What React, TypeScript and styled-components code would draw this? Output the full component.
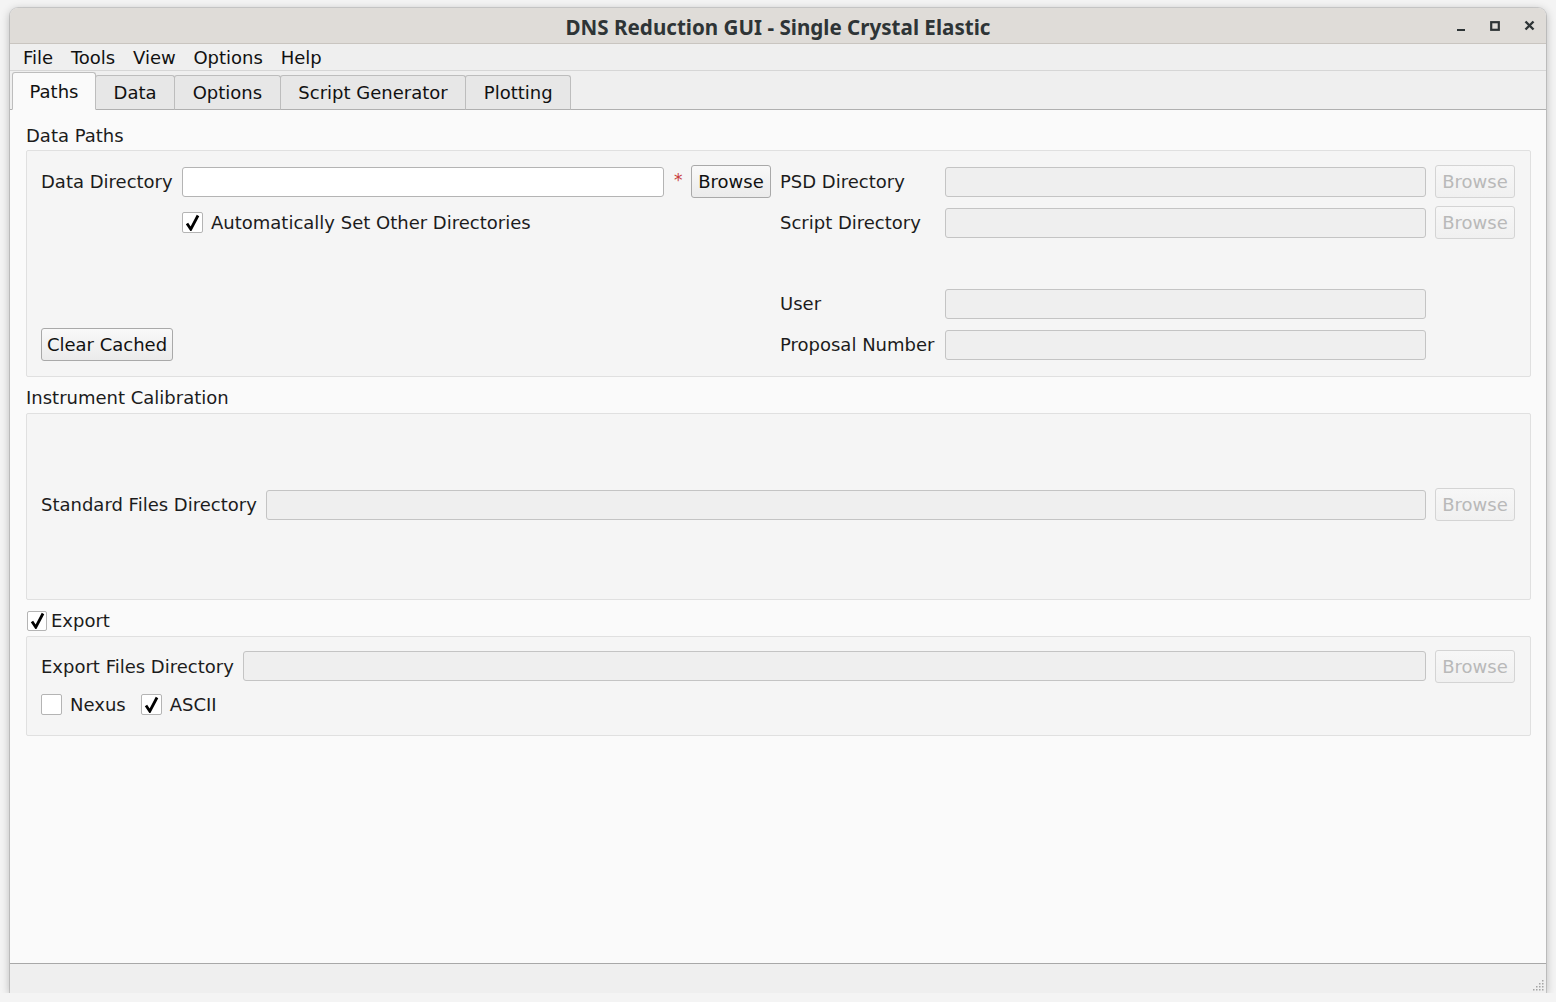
import React from 'react'
import styled, { createGlobalStyle } from 'styled-components'

const GlobalStyle = createGlobalStyle`
  html, body {
    margin: 0;
    padding: 0;
    background: #f4f4f4;
    font-family: "DejaVu Sans", "Liberation Sans", sans-serif;
    font-size: 18px;
    color: #1c1c1c;
  }
  * { box-sizing: border-box; }
`

/* ─── Window chrome ─────────────────────────────────── */

const Window = styled.div`
  margin: 8px 0 0 10px;
  width: 1536px;
  height: 985px;
  display: flex;
  flex-direction: column;
  background: #efefef;
  border-radius: 8px 8px 0 0;
  box-shadow: 0 2px 10px rgba(0, 0, 0, 0.28), 0 0 0 1px rgba(0, 0, 0, 0.12);
  overflow: hidden;
`

const TitleBar = styled.div`
  height: 36px;
  flex-shrink: 0;
  display: flex;
  align-items: center;
  justify-content: center;
  position: relative;
  background: #dfdcd8;
  border-bottom: 1px solid #c9c5c0;
`

const Title = styled.span`
  font-family: "Noto Sans", "DejaVu Sans", sans-serif;
  font-weight: 700;
  font-size: 20.6px;
  color: #2e3436;
  margin-top: 2px;
`

const WinButtons = styled.div`
  position: absolute;
  right: 10px;
  top: 0;
  height: 100%;
  display: flex;
  align-items: center;
  gap: 20px;
`

const WinBtn = styled.span`
  width: 14px;
  height: 14px;
  display: flex;
  align-items: center;
  justify-content: center;
  color: #2e3436;
`

const MenuBar = styled.div`
  height: 27px;
  flex-shrink: 0;
  display: flex;
  align-items: center;
  padding-left: 4px;
  border-bottom: 1px solid #d6d6d6;
`

const MenuItem = styled.span`
  padding: 0 9px;
  line-height: 26px;
  margin-top: 2px;
  margin-right: -0.25px;
  color: #111;
`

const TabBar = styled.div`
  height: 38px;
  flex-shrink: 0;
  display: flex;
  align-items: flex-end;
  padding-left: 2px;
`

const Tab = styled.div<{ $active?: boolean }>`
  height: ${p => (p.$active ? '38px' : '35px')};
  padding: 0 ${p => (p.$active ? '16.5px' : '17.6px')};
  display: flex;
  align-items: center;
  background: ${p => (p.$active ? '#fafafa' : '#e7e7e7')};
  border: 1px solid #bdbdbd;
  border-bottom: ${p => (p.$active ? '1px solid #fafafa' : '1px solid #b0b0b0')};
  margin-left: ${p => (p.$active ? '0' : '-1px')};
  margin-bottom: -1px;
  border-radius: 3px 3px 0 0;
  color: #111;
  position: relative;
  z-index: ${p => (p.$active ? 2 : 1)};
`

const Pane = styled.div`
  flex: 1;
  background: #fafafa;
  border-top: 1px solid #b0b0b0;
  border-bottom: 1px solid #a8a8a8;
  padding: 14px 15px 0 16px;
  display: flex;
  flex-direction: column;
`

const StatusBar = styled.div`
  height: 29px;
  flex-shrink: 0;
  display: flex;
  justify-content: flex-end;
  align-items: flex-end;
  padding: 0 2px 2px 0;
`

/* ─── Group boxes ──────────────────────────────────── */

const SectionTitle = styled.div<{ $first?: boolean }>`
  height: 24px;
  line-height: 24px;
  margin-top: ${p => (p.$first ? '0' : '8.5px')};
  margin-bottom: ${p => (p.$first ? '2px' : '3px')};
  display: flex;
  align-items: center;
`

const TitleCheck = styled.div`
  display: flex;
  align-items: center;
  gap: 4px;
  margin-left: 1px;
`

const Group = styled.div<{ $minHeight?: number }>`
  background: #f5f5f5;
  border: 1px solid #e0e0e0;
  border-radius: 2px;
  min-height: ${p => (p.$minHeight ? `${p.$minHeight}px` : 'auto')};
`

const PathsGrid = styled.div`
  display: grid;
  grid-template-columns: 132px 482px 9px 80px 156px 1fr 80px;
  grid-template-rows: 33px 33px 32px 33px 33px;
  column-gap: 9px;
  row-gap: 8px;
  align-items: center;
  padding: 14px 15px 15px 14px;
`

const Cell = styled.div<{ $col: string; $row: number }>`
  grid-column: ${p => p.$col};
  grid-row: ${p => p.$row};
  display: flex;
  align-items: center;
  white-space: nowrap;
`

const CalibGroup = styled(Group)`
  display: flex;
  align-items: center;
  padding: 0 15px 0 14px;
`

const DirRow = styled.div`
  flex: 1;
  display: grid;
  grid-template-columns: auto 1fr 80px;
  column-gap: 9px;
  align-items: center;
  height: 33px;
  margin-top: -3px;
`

const ExportGrid = styled.div`
  display: grid;
  grid-template-columns: auto 1fr 80px;
  grid-template-rows: 33px 22px;
  column-gap: 9px;
  row-gap: 11px;
  align-items: center;
  padding: 13px 15px 19px 14px;
`

const Label = styled.span`
  white-space: nowrap;
  color: #1c1c1c;
`

const TextInput = styled.div<{ $disabled?: boolean }>`
  width: 100%;
  height: 30px;
  background: ${p => (p.$disabled ? '#efefef' : '#ffffff')};
  border: 1px solid ${p => (p.$disabled ? '#c4c4c4' : '#b4b4b4')};
  border-radius: 3px;
`

const Button = styled.div<{ $disabled?: boolean; $fill?: boolean }>`
  height: 33px;
  width: ${p => (p.$fill ? '100%' : 'auto')};
  padding: 0 6px;
  display: flex;
  align-items: center;
  justify-content: center;
  white-space: nowrap;
  border: 1px solid ${p => (p.$disabled ? '#d4d4d4' : '#a9a9a9')};
  border-radius: 3px;
  background: ${p =>
    p.$disabled
      ? 'linear-gradient(#f7f7f7, #f0f0f0)'
      : 'linear-gradient(#f9f9f9, #ebebeb)'};
  color: ${p => (p.$disabled ? '#b9b9b9' : '#111')};
`

const Asterisk = styled.span`
  color: #c83c3c;
  font-size: 17px;
  margin-top: -4px;
  margin-left: 1px;
`

const CheckRow = styled.div`
  display: flex;
  align-items: center;
  gap: 8px;
`

const Box = styled.span<{ $size: number }>`
  width: ${p => p.$size}px;
  height: ${p => p.$size}px;
  flex-shrink: 0;
  display: flex;
  align-items: center;
  justify-content: center;
  background: #ffffff;
  border: 1px solid #b4b4b4;
  border-radius: 2px;
`

const CheckPair = styled.div`
  grid-column: 1 / 3;
  display: flex;
  align-items: center;
  gap: 15px;
`

/* ─── Small drawings ────────────────────────────────── */

function Check({ on, size = 21 }: { on?: boolean; size?: number }) {
  return (
    <Box $size={size}>
      {on && (
        <svg width="15" height="17" viewBox="0 0 15 17">
          <path d="M2 9.5 L5.8 15.2 L13 1.5" fill="none" stroke="#000" strokeWidth="2.8" strokeLinejoin="miter" />
        </svg>
      )}
    </Box>
  )
}

function Grip() {
  const dots = [
    [9, 0], [9, 3], [6, 3], [9, 6], [6, 6], [3, 6], [9, 9], [6, 9], [3, 9], [0, 9],
  ]
  return (
    <svg width="11" height="11" viewBox="0 0 11 11">
      {dots.map(([x, y]) => (
        <rect key={`${x}-${y}`} x={x} y={y} width="1.5" height="1.5" fill="#a4a4a4" />
      ))}
    </svg>
  )
}

/* ─── Component ──────────────────────────────────────── */

export default function App() {
  return (
    <>
      <GlobalStyle />
      <Window>
        <TitleBar>
          <Title>DNS Reduction GUI - Single Crystal Elastic</Title>
          <WinButtons>
            <WinBtn>
              <svg width="10" height="10" viewBox="0 0 10 10">
                <rect x="1" y="8" width="8" height="2" fill="currentColor" />
              </svg>
            </WinBtn>
            <WinBtn>
              <svg width="10" height="10" viewBox="0 0 10 10">
                <rect x="1.2" y="1.2" width="7.6" height="7.6" fill="none" stroke="currentColor" strokeWidth="2.2" />
              </svg>
            </WinBtn>
            <WinBtn>
              <svg width="11" height="11" viewBox="0 0 11 11">
                <path d="M1.5 1.5 L9.5 9.5 M9.5 1.5 L1.5 9.5" stroke="currentColor" strokeWidth="2.4" />
              </svg>
            </WinBtn>
          </WinButtons>
        </TitleBar>

        <MenuBar>
          {['File', 'Tools', 'View', 'Options', 'Help'].map(m => (
            <MenuItem key={m}>{m}</MenuItem>
          ))}
        </MenuBar>

        <TabBar>
          <Tab $active>Paths</Tab>
          <Tab>Data</Tab>
          <Tab>Options</Tab>
          <Tab>Script Generator</Tab>
          <Tab>Plotting</Tab>
        </TabBar>

        <Pane>
          <SectionTitle $first>Data Paths</SectionTitle>
          <Group>
            <PathsGrid>
              <Cell $col="1" $row={1}><Label>Data Directory</Label></Cell>
              <Cell $col="2" $row={1}><TextInput /></Cell>
              <Cell $col="3" $row={1}><Asterisk>*</Asterisk></Cell>
              <Cell $col="4" $row={1}><Button $fill>Browse</Button></Cell>
              <Cell $col="5" $row={1}><Label>PSD Directory</Label></Cell>
              <Cell $col="6" $row={1}><TextInput $disabled /></Cell>
              <Cell $col="7" $row={1}><Button $fill $disabled>Browse</Button></Cell>

              <Cell $col="2 / 5" $row={2}>
                <CheckRow>
                  <Check on />
                  <Label>Automatically Set Other Directories</Label>
                </CheckRow>
              </Cell>
              <Cell $col="5" $row={2}><Label>Script Directory</Label></Cell>
              <Cell $col="6" $row={2}><TextInput $disabled /></Cell>
              <Cell $col="7" $row={2}><Button $fill $disabled>Browse</Button></Cell>

              <Cell $col="5" $row={4}><Label>User</Label></Cell>
              <Cell $col="6" $row={4}><TextInput $disabled /></Cell>

              <Cell $col="1" $row={5}><Button $fill>Clear Cached</Button></Cell>
              <Cell $col="5" $row={5}><Label>Proposal Number</Label></Cell>
              <Cell $col="6" $row={5}><TextInput $disabled /></Cell>
            </PathsGrid>
          </Group>

          <SectionTitle>Instrument Calibration</SectionTitle>
          <CalibGroup $minHeight={187.5}>
            <DirRow>
              <Label>Standard Files Directory</Label>
              <TextInput $disabled />
              <Button $disabled>Browse</Button>
            </DirRow>
          </CalibGroup>

          <SectionTitle>
            <TitleCheck>
              <Check on size={20} />
              <Label>Export</Label>
            </TitleCheck>
          </SectionTitle>
          <Group>
            <ExportGrid>
              <Label>Export Files Directory</Label>
              <TextInput $disabled />
              <Button $disabled>Browse</Button>
              <CheckPair>
                <CheckRow>
                  <Check />
                  <Label>Nexus</Label>
                </CheckRow>
                <CheckRow>
                  <Check on />
                  <Label>ASCII</Label>
                </CheckRow>
              </CheckPair>
            </ExportGrid>
          </Group>
        </Pane>

        <StatusBar>
          <Grip />
        </StatusBar>
      </Window>
    </>
  )
}
